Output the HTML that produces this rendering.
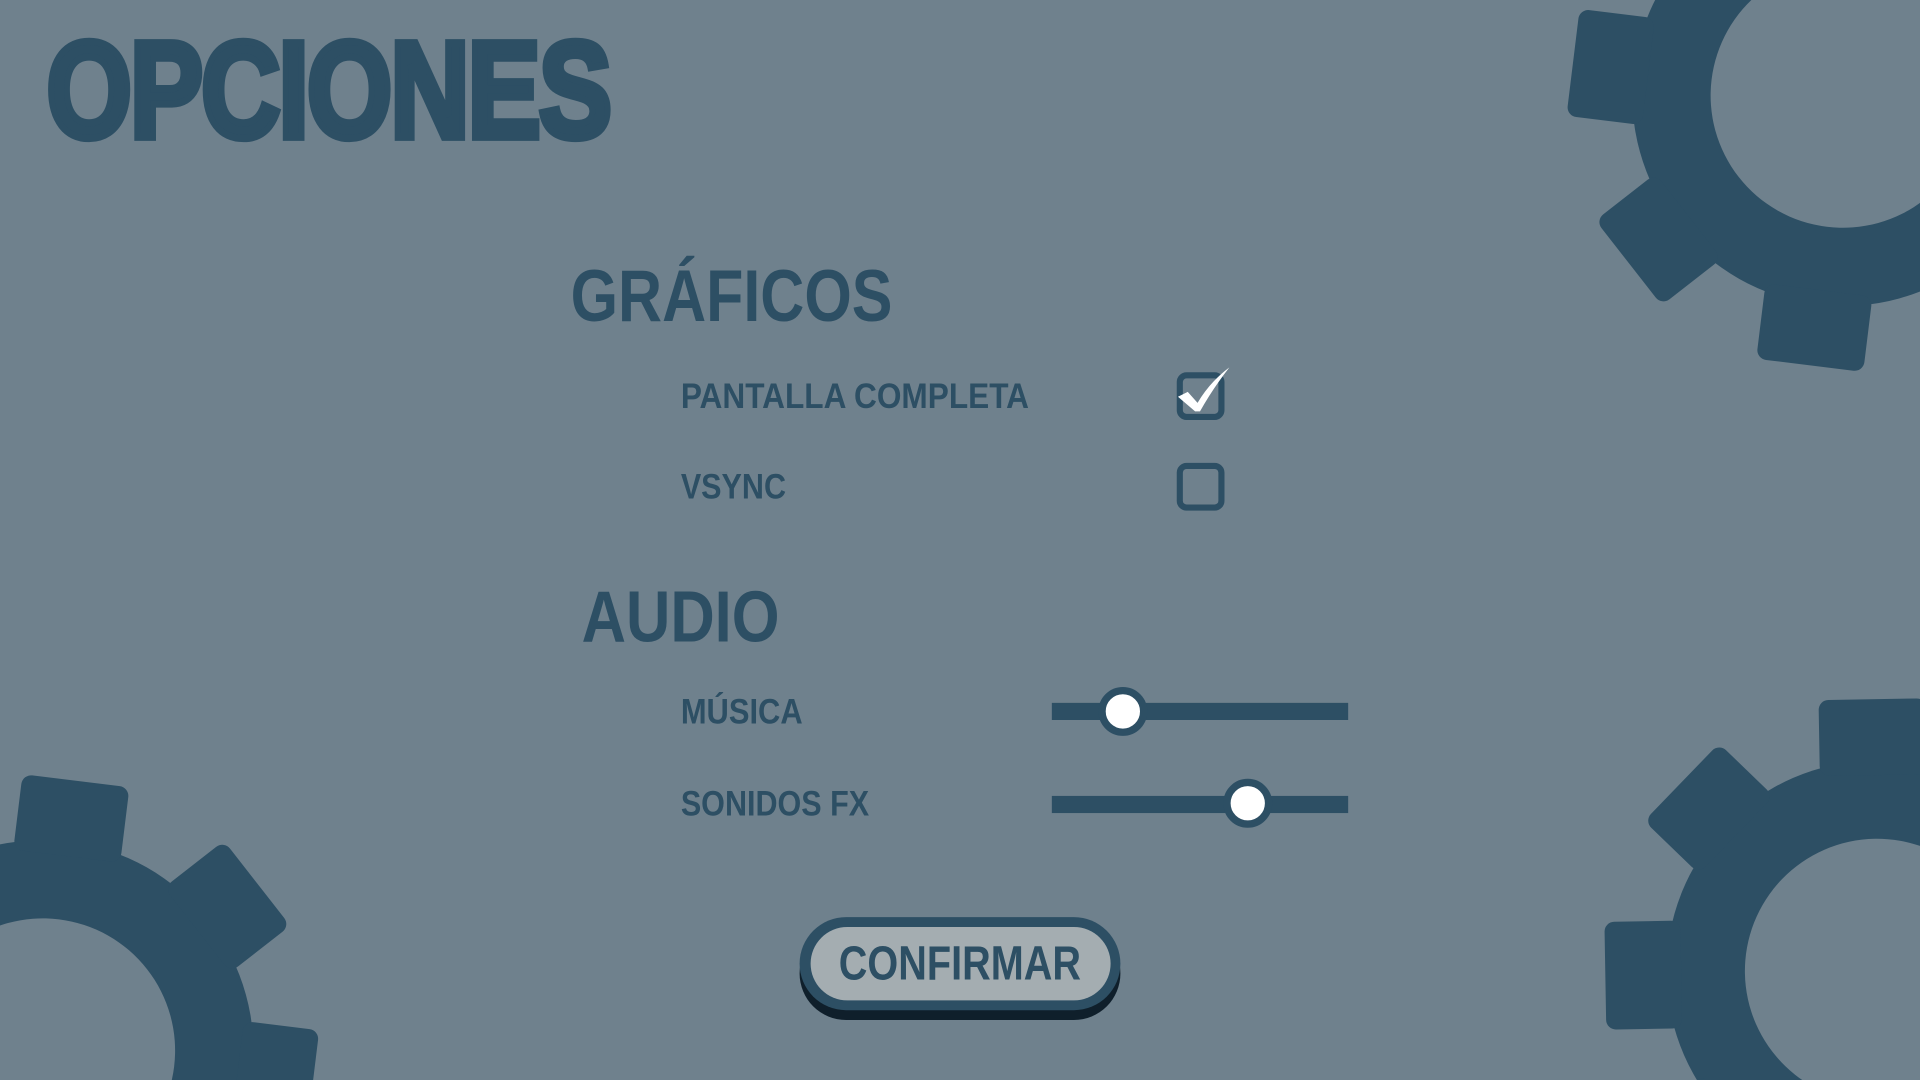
<!DOCTYPE html>
<html><head><meta charset="utf-8"><style>
html,body{margin:0;padding:0;width:1920px;height:1080px;overflow:hidden;background:#6f818d}
#s{position:absolute;left:0;top:0;width:1568px;height:882px;overflow:hidden;transform:scale(1.22449);transform-origin:0 0;font-family:"Liberation Sans",sans-serif;color:#2d4f64}
.t{position:absolute;font-weight:bold;white-space:nowrap;transform-origin:0 0}
.cb{position:absolute;width:29px;height:29px;border:5px solid #2d4f64;border-radius:8px;left:961px}
.track{position:absolute;left:859px;width:242px;height:14px;background:#2d4f64}
.knob{position:absolute;width:28px;height:28px;border-radius:50%;background:#fff;border:6px solid #2d4f64}
</style></head><body><div id="s">
<svg width="1568" height="882" style="position:absolute;left:0;top:0">
<defs>
<g id="gear">
<circle r="172" fill="#2d4f64"/>
<rect x="160" y="-44" width="62" height="88" rx="8" fill="#2d4f64" transform="rotate(0)"/>
<rect x="160" y="-44" width="62" height="88" rx="8" fill="#2d4f64" transform="rotate(45)"/>
<rect x="160" y="-44" width="62" height="88" rx="8" fill="#2d4f64" transform="rotate(90)"/>
<rect x="160" y="-44" width="62" height="88" rx="8" fill="#2d4f64" transform="rotate(135)"/>
<rect x="160" y="-44" width="62" height="88" rx="8" fill="#2d4f64" transform="rotate(180)"/>
<rect x="160" y="-44" width="62" height="88" rx="8" fill="#2d4f64" transform="rotate(225)"/>
<rect x="160" y="-44" width="62" height="88" rx="8" fill="#2d4f64" transform="rotate(270)"/>
<rect x="160" y="-44" width="62" height="88" rx="8" fill="#2d4f64" transform="rotate(315)"/>
<circle r="108" fill="#6f818d"/>
</g>
</defs>
<use href="#gear" transform="translate(1505,78) rotate(7)"/>
<use href="#gear" transform="translate(35,858) rotate(7)"/>
<use href="#gear" transform="translate(1533,793) rotate(-1)"/>
</svg>
<div class="t" style="left:38px;top:14px;font-size:112px;line-height:120px;transform:scaleX(0.80);-webkit-text-stroke:6px #2d4f64;letter-spacing:-2px">OPCIONES</div>
<div class="t" style="left:466px;top:207px;font-size:60px;line-height:70px;transform:scaleX(0.83)">GRÁFICOS</div>
<div class="t" style="left:556px;top:307px;font-size:29px;line-height:34px;transform:scaleX(0.89)">PANTALLA COMPLETA</div>
<div class="t" style="left:556px;top:381px;font-size:29px;line-height:34px;transform:scaleX(0.86)">VSYNC</div>
<div class="t" style="left:475px;top:469px;font-size:59px;line-height:70px;transform:scaleX(0.85)">AUDIO</div>
<div class="t" style="left:556px;top:565px;font-size:29px;line-height:34px;transform:scaleX(0.87)">MÚSICA</div>
<div class="t" style="left:556px;top:640px;font-size:29px;line-height:34px;transform:scaleX(0.86)">SONIDOS FX</div>
<div class="cb" style="top:304px"></div>
<svg style="position:absolute;left:958px;top:298px" width="50" height="44"><path d="M4 26 L12 22 L20 31 Q30 14 46 2 Q32 20 22 38 L18 38 Z" fill="#fff"/></svg>
<div class="cb" style="top:378px"></div>
<div class="track" style="top:574px"></div>
<div class="knob" style="left:897px;top:561px"></div>
<div class="track" style="top:650px"></div>
<div class="knob" style="left:999px;top:636px"></div>
<div style="position:absolute;left:653px;top:757px;width:262px;height:76px;border-radius:38px;background:#0f1f2b"></div>
<div style="position:absolute;left:653px;top:749px;width:262px;height:76px;border-radius:38px;background:#2d4f64"></div>
<div style="position:absolute;left:662px;top:757px;width:245px;height:60px;border-radius:30px;background:#a4adb1"></div>
<div class="t" style="left:685px;top:766px;font-size:39px;line-height:44px;transform:scaleX(0.83)">CONFIRMAR</div>
</div></body></html>
